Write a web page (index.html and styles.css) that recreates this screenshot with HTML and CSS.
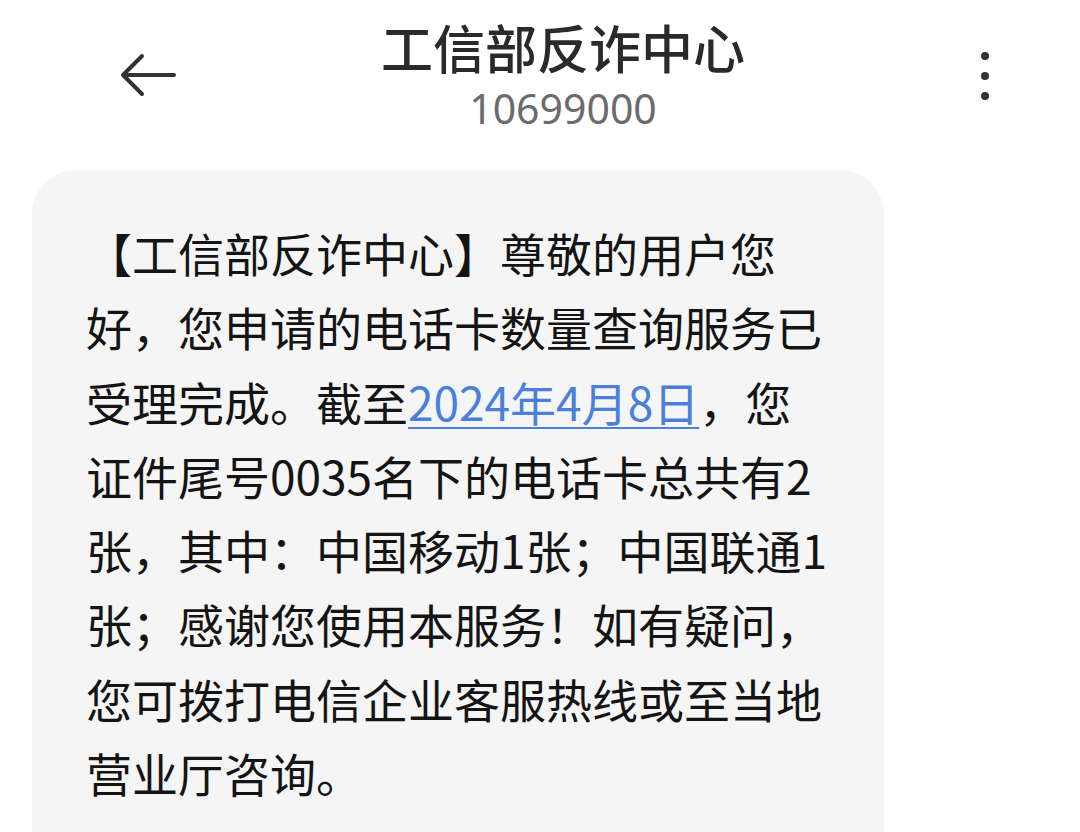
FILE: index.html
```html
<!DOCTYPE html>
<html lang="zh-CN">
<head>
<meta charset="utf-8">
<link rel="stylesheet" href="styles.css">
</head>
<body>
<div class="page">
  <header class="topbar">
    <div class="back">
      <svg width="60" height="44" viewBox="0 0 60 44"><path d="M56 22H6M24 3L5 22L24 41" fill="none" stroke="#333" stroke-width="4" stroke-linecap="round" stroke-linejoin="round"/></svg>
    </div>
    <div class="titles">
      <div class="title">工信部反诈中心</div>
      <div class="number">10699000</div>
    </div>
    <div class="more"><span></span><span></span><span></span></div>
  </header>
  <div class="bubble">
    <p class="msg">【工信部反诈中心】尊敬的用户您<br>好，您申请的电话卡数量查询服务已<br>受理完成。截至<span class="link">2024年4月8日</span>，您<br>证件尾号0035名下的电话卡总共有2<br>张，其中：中国移动1张；中国联通1<br>张；感谢您使用本服务！如有疑问，<br>您可拨打电信企业客服热线或至当地<br>营业厅咨询。</p>
  </div>
</div>
</body>
</html>
```

FILE: styles.css
```css
html, body {
  margin: 0;
  padding: 0;
  background: #ffffff;
  font-family: "Noto Sans CJK SC", "Noto Sans", sans-serif;
}
.page {
  width: 1080px;
  height: 832px;
  overflow: hidden;
}
.topbar {
  display: flex;
  align-items: flex-start;
  height: 170px;
}
.back {
  width: 120px;
  padding-left: 118px;
  padding-top: 53px;
}
.back svg { display: block; }
.titles {
  flex: 1;
  display: flex;
  flex-direction: column;
  align-items: center;
  padding-top: 12px;
  margin-left: -92px;
}
.title {
  font-size: 52px;
  font-weight: 500;
  color: #2a2a2a;
  line-height: 70px;
}
.number {
  font-size: 41px;
  color: #6b6b6b;
  line-height: 52px;
  font-family: "Noto Sans", sans-serif;
}
.more {
  width: 10px;
  margin-right: 90px;
  padding-top: 52px;
  display: flex;
  flex-direction: column;
  gap: 12px;
  align-items: center;
}
.more span {
  width: 8px;
  height: 8px;
  border-radius: 50%;
  background: #333;
}
.bubble {
  margin-left: 32px;
  width: 852px;
  background: #f5f5f5;
  border-radius: 44px;
  padding: 45px 0 60px 54px;
  box-sizing: border-box;
}
.msg {
  margin: 0;
  font-size: 46px;
  line-height: 74.3px;
  color: #141414;
  white-space: nowrap;
}
.link {
  color: #4a80d9;
  text-decoration: underline;
  text-decoration-thickness: 2px;
  text-underline-offset: 6px;
}
```
